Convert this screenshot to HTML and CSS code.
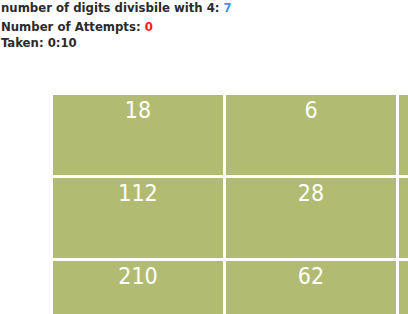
FILE: index.html
```html
<!DOCTYPE html>
<html>
<head>
<meta charset="utf-8">
<link rel="stylesheet" href="styles.css">
</head>
<body>
<div class="info">
  <div class="line title">number of digits divisbile with 4: <span class="blue">7</span></div>
  <div class="line">Number of Attempts: <span class="red">0</span></div>
  <div class="line">Taken: 0:10</div>
</div>
<div class="board">
  <div class="cell">18</div>
  <div class="cell">6</div>
  <div class="cell"></div>
  <div class="cell">112</div>
  <div class="cell">28</div>
  <div class="cell"></div>
  <div class="cell">210</div>
  <div class="cell">62</div>
  <div class="cell"></div>
</div>
</body>
</html>
```

FILE: styles.css
```css
html, body {
  margin: 0;
  padding: 0;
  background: #fff;
  overflow: hidden;
}
body {
  width: 408px;
  height: 314px;
  font-family: "DejaVu Sans Condensed", "DejaVu Sans", sans-serif;
}
.info {
  padding: 0 0 0 1px;
  font-weight: bold;
  font-size: 13px;
  line-height: 16.5px;
  color: #2b2b2b;
}
.title {
  margin-bottom: 2px;
}
.blue { color: #4a90e2; }
.red { color: #ff1a1a; }
.board {
  margin: 43px 0 0 53px;
  display: grid;
  grid-template-columns: repeat(3, 170px);
  grid-auto-rows: 80px;
  gap: 3px;
  width: 600px;
}
.cell {
  background: #b1bb71;
  color: #fff;
  font-size: 23px;
  text-align: center;
  line-height: 30px;
}
```
